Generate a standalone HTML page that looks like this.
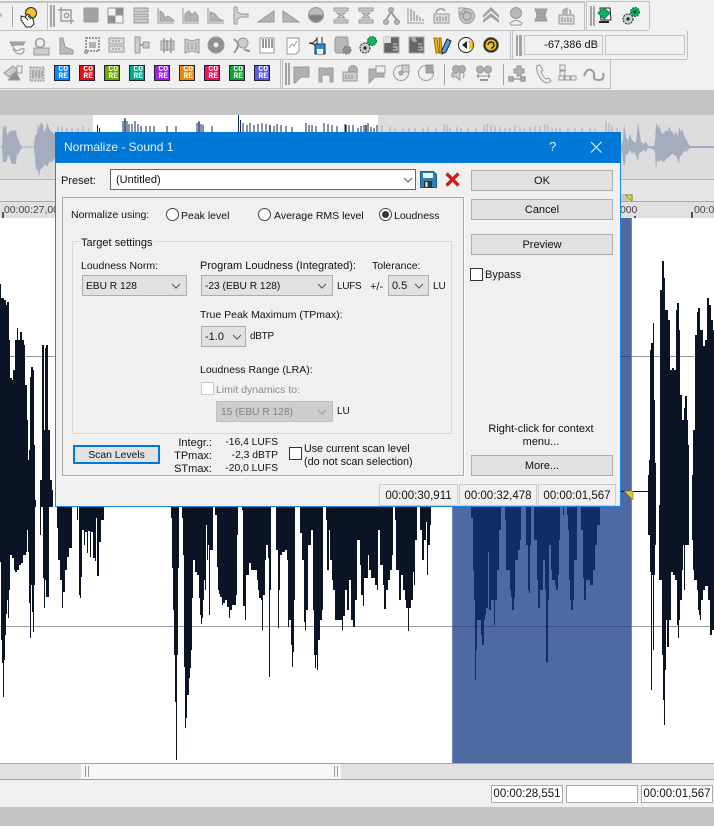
<!DOCTYPE html>
<html><head><meta charset="utf-8"><title>Normalize - Sound 1</title>
<style>
html,body{margin:0;padding:0;background:#f0f0f0}
body{position:relative;width:714px;height:826px;overflow:hidden;font:11px/14px "Liberation Sans",sans-serif;color:#111}
.a{position:absolute;box-sizing:border-box}
.t{position:absolute;white-space:nowrap;line-height:14px;margin-top:1px}
.s{font-size:10.5px}
.btn{position:absolute;box-sizing:border-box;background:#e1e1e1;border:1px solid #adadad;text-align:center;left:471px;width:142px;height:21px;line-height:21px}
.sel{position:absolute;box-sizing:border-box;background:#e1e1e1;border:1px solid #adadad;height:21px;line-height:21px;padding-left:3px;white-space:nowrap;font-size:10.2px}
.sel svg{position:absolute;right:5px;top:7px}
.box{position:absolute;box-sizing:border-box;background:#f0f0f0;border:1px solid #ccc;text-align:center;height:22px;top:484px;line-height:22px;font-size:11.5px}
.cb{position:absolute;box-sizing:border-box;width:13px;height:13px;background:#fff;border:1px solid #333}
.rad{position:absolute;box-sizing:border-box;width:13px;height:13px;background:#fff;border:1px solid #444;border-radius:50%}
.st{position:absolute;box-sizing:border-box;top:785px;height:18px;width:72px;background:#fff;border:1px solid #aaa;text-align:center;line-height:16px;font-size:11.5px}
.core{position:absolute;box-sizing:border-box;top:65px;width:16px;height:16px;border:1px solid #223;color:#fff;font:bold 8px/7px "Liberation Mono",monospace;text-align:right;padding:0 1px 0 0;overflow:hidden}
</style></head><body>

<!-- toolbar frame -->
<div class="a" style="left:0;top:0;width:714px;height:90px;background:#f0f0f0"></div>
<div class="a" style="left:0;top:1px;width:585px;height:2px;background:#c4c4c4"></div>
<div class="a" style="left:0;top:30px;width:649px;height:1px;background:#c0c0c0"></div>
<div class="a" style="left:0;top:59px;width:687px;height:1px;background:#c0c0c0"></div>
<div class="a" style="left:0;top:88px;width:611px;height:1px;background:#c0c0c0"></div>
<div class="a" style="left:584px;top:1px;width:1px;height:29px;background:#c0c0c0"></div>
<div class="a" style="left:586px;top:1px;width:64px;height:1px;background:#c0c0c0"></div>
<div class="a" style="left:586px;top:1px;width:1px;height:29px;background:#c0c0c0"></div>
<div class="a" style="left:649px;top:1px;width:1px;height:29px;background:#c0c0c0"></div>
<div class="a" style="left:510px;top:31px;width:1px;height:28px;background:#c0c0c0"></div>
<div class="a" style="left:512px;top:31px;width:1px;height:28px;background:#c0c0c0"></div>
<div class="a" style="left:687px;top:31px;width:1px;height:28px;background:#c0c0c0"></div>
<div class="a" style="left:280px;top:60px;width:1px;height:28px;background:#c0c0c0"></div>
<div class="a" style="left:282px;top:60px;width:1px;height:28px;background:#c0c0c0"></div>
<div class="a" style="left:610px;top:60px;width:1px;height:29px;background:#c0c0c0"></div>
<div class="a" style="left:47px;top:3px;width:1px;height:27px;background:#c0c0c0"></div>

<svg class="a" style="left:0;top:0" width="714" height="90" viewBox="0 0 714 90">
<g fill="#a4a4a4">
<rect x="50" y="5" width="2" height="22"/><rect x="53" y="5" width="2" height="22"/>
<rect x="590" y="6" width="2" height="20"/><rect x="593" y="6" width="2" height="20"/>
<rect x="516" y="35" width="2" height="21"/><rect x="519" y="35" width="3" height="21"/>
<rect x="285" y="63" width="2" height="22"/><rect x="288" y="63" width="2" height="22"/>
<rect x="12" y="6" width="1" height="21"/><rect x="444" y="64" width="1" height="21"/><rect x="503" y="64" width="1" height="21"/>
</g>
<path d="M0 13a2 2 0 0 1 0 4" fill="#bbb"/>
<!-- hand -->
<g transform="translate(19,7)"><circle cx="12" cy="6" r="5.5" fill="#f2c230" stroke="#222"/><path d="M2 9l4 1 3-3 5 5 1 5-3 3H7L2 13z" fill="#fff" stroke="#222"/><path d="M6 10l3 3M9 9l3 3" stroke="#222"/></g>
<!-- row 1 -->
<g fill="#b4b4b4" stroke="#999" stroke-width="1">
<g transform="translate(58,7)" fill="none" stroke-width="1.4"><path d="M3 0V14H16M0 3H13V17"/><circle cx="8.500" cy="8.500" r="2.200"/></g>
<rect x="84" y="8" width="14" height="14" rx="1" fill="#a2a2a2"/>
<g transform="translate(108,8)"><rect width="15" height="15" fill="#f4f4f4"/><rect x="7.500" y="0" width="7.500" height="7.500" fill="#909090" stroke="none"/><rect x="0" y="7.500" width="7.500" height="7.500" fill="#909090" stroke="none"/></g>
<g transform="translate(133,8)"><path d="M1 0h14v4H1zM1 6h14v3H1zM1 11h14v4H1z" fill="#ccc"/></g>
<g transform="translate(158,8)"><path d="M0 0V15H16" fill="none"/><path d="M2 13V3l3 2 2 5 3-2 4 3 2 2z"/></g>
<g transform="translate(183,8)"><path d="M0 0V15H16" fill="none"/><path d="M2 13V6l4-3 3 4 3-3 3 4v5z"/></g>
<g transform="translate(208,8)"><path d="M0 0V15H16" fill="none"/><path d="M2 13V4l5 2 4 5 5 2z"/></g>
<g transform="translate(233,7)"><path d="M1 0h3v5l4 2h7v3H8l-4 2v5H1z" fill="#d4d4d4"/></g>
<path d="M258 22L274 11v11z"/><path d="M283 11v11h16z"/>
<circle cx="316" cy="15" r="7.500" fill="#bcbcbc"/><path d="M309 15h14a7 7 0 0 1-14 0z" fill="#808080"/>
<g transform="translate(333,8)"><path d="M1 0h14v3H1zM4 5h8l-3 2.500 3 2.500H4l3-2.500zM1 12h14v3H1z" fill="#ccc"/></g>
<g transform="translate(358,8)"><path d="M1 0h14v3H1zM4 5h8l-3 2.500 3 2.500H4l3-2.500zM1 12h14v3H1z" fill="#ccc"/></g>
<g transform="translate(383,7)"><circle cx="8" cy="3" r="2.500"/><circle cx="3" cy="15" r="2.500"/><circle cx="14" cy="15" r="2.500"/><path d="M8 5L3 13M8 5l6 8" fill="none" stroke-width="2"/></g>
<g transform="translate(408,8)"><path d="M0 0V15H16" fill="none"/><path d="M2 1h2v12H2zM5 3h2v10H5zM8 7h2v6H8zM11 9h2v4h-2zM14 11h2v2h-2z" stroke="none"/></g>
<g transform="translate(433,8)"><path d="M1 6h15v9H1z" fill="#ddd"/><path d="M3 5a5 5 0 0 1 9-2" fill="none" stroke-width="1.5"/><path d="M4 9v4M7 8v5M10 9v4M13 8v5" stroke="#888"/></g>
<g transform="translate(458,7)"><circle cx="9" cy="9" r="7.500" fill="#c4c4c4"/><circle cx="9" cy="9" r="4" fill="none" stroke="#888"/><rect x="1" y="1" width="6" height="6" fill="none"/></g>
<path d="M483 15l8-8 8 8v3l-8-7-8 7zM483 20l8-7 8 7v3l-8-6-8 6z" stroke="none" fill="#a2a2a2"/>
<g transform="translate(508,7)"><circle cx="8" cy="6" r="5.500" fill="#b8b8b8"/><path d="M2 16q6-5 12 0l-1 2H3z" fill="#eee"/></g>
<path d="M535 9h12l-2 6 2 6h-12l2-6z" fill="#a2a2a2"/>
<g transform="translate(558,7)"><path d="M1 8h15v9H1z" fill="#ddd"/><path d="M5 8V3l4-2v7M11 2q3 3 1 6" fill="#bbb"/><path d="M4 10v5M7 11v4M10 10v5M13 11v4" stroke="#888"/></g>
</g>
<!-- group 2 row 1 -->
<g transform="translate(596,7)"><path d="M4 1h10l1 12H5z" fill="#fff" stroke="#222"/><path d="M2 6l6-5 6 5-6 6z" fill="#10b060" stroke="#084"/><path d="M3 15h10" stroke="#222" stroke-width="2"/></g>
<g transform="translate(622,7)"><circle cx="6" cy="12" r="5" fill="#ccc" stroke="#222" stroke-dasharray="2 1"/><circle cx="6" cy="12" r="1.600" fill="#222"/><circle cx="13" cy="5" r="4.500" fill="#10b060" stroke="#073" stroke-dasharray="2 1"/><circle cx="13" cy="5" r="1.500" fill="#222"/></g>
<!-- row 2 -->
<g fill="#b0b0b0" stroke="#999">
<g transform="translate(9,38)"><path d="M1 4h15l-2 3H7L3 8z" fill="#a2a2a2"/><path d="M4 9q3 5 6 3t5-1q0 5-4 5T4 11" fill="none" stroke-width="1.2"/></g>
<g transform="translate(34,37)"><circle cx="6" cy="6" r="4.500" fill="#eee" stroke-width="1.5"/><path d="M0 11h15v7H0z" fill="#ccc"/></g>
<path d="M60 38h3l2 9 8 3v4H60z" fill="#bbb"/>
<g transform="translate(84,37)"><rect x="2" y="1" width="13" height="13" fill="none" stroke-dasharray="2 1" stroke-width="2"/><circle cx="2" cy="15" r="1.500"/><path d="M5 5h7v6H5z" fill="#b4b4b4" stroke="none"/></g>
<g transform="translate(109,38)"><rect width="15" height="6" fill="#ddd"/><rect y="8" width="15" height="6" fill="#ddd"/><path d="M3 3h9M3 11h9" stroke="#888" stroke-dasharray="2 1"/></g>
<g transform="translate(134,37)"><path d="M1 0h5v16H1zM9 5h6v6H9z" fill="#ccc"/><path d="M6 8h3" stroke-width="2"/></g>
<g transform="translate(159,38)"><path d="M2 3h13v9H2z" fill="#ccc"/><path d="M5 0v15M8 2v11M12 0v15" stroke-width="1.5"/></g>
<g transform="translate(184,38)"><path d="M1 1l7 2 7-2v14l-7-2-7 2z" fill="#ccc"/><path d="M4 4v8M8 5v6M12 4v8"/></g>
<circle cx="216" cy="45" r="8" fill="#909090"/><circle cx="216" cy="45" r="2.500" fill="#eee" stroke="none"/>
<g transform="translate(234,37)"><circle cx="9" cy="6" r="5" fill="#ccc"/><path d="M0 2q4 3 4 6T0 16M16 14q-3 0-6-2" fill="none" stroke-width="2"/></g>
<g transform="translate(260,38)"><rect width="14" height="15" fill="#fff"/><path d="M3 1v9M6 1v9M9 1v9M12 1v9" stroke="#777" stroke-width="1.5"/></g>
<g transform="translate(286,37)"><path d="M1 1h12v13l-3 3H1z" fill="#fff"/><path d="M3 11l3-4 2 2 3-5" fill="none"/></g>
<g transform="translate(309,36)"><path d="M0 7h4l4-4v8l-4-3z" fill="#fff" stroke="#222"/><rect x="6" y="8" width="10" height="10" fill="#3a8ad0" stroke="#134"/><rect x="8" y="13" width="6" height="5" fill="#fff" stroke="none"/><path d="M8 1v6M13 1v6" stroke="#222" fill="none"/></g>
<g transform="translate(335,37)"><rect x="0" y="0" width="13" height="16" rx="2" fill="#b8b8b8"/><circle cx="12" cy="13" r="4" fill="#909090" stroke="#777" stroke-dasharray="2 1"/></g>
<g transform="translate(359,37)"><circle cx="6" cy="11" r="5" fill="#ccc" stroke="#222" stroke-dasharray="2 1"/><circle cx="6" cy="11" r="1.600" fill="#222" stroke="none"/><circle cx="13" cy="4" r="4.500" fill="#10b060" stroke="#073" stroke-dasharray="2 1"/></g>
<g transform="translate(384,37)"><rect width="15" height="16" fill="#666" stroke="#aaa"/><rect x="0" y="0" width="7" height="6" fill="#ddd" stroke="none"/><path d="M9 7h4M9 10h4v3H9" fill="none" stroke="#ddd"/></g>
<g transform="translate(409,37)"><rect width="15" height="16" fill="#666" stroke="#aaa"/><path d="M1 0h5l2 5H4z" fill="#aaa" stroke="none"/><path d="M9 7h4M9 10h4v3H9" fill="none" stroke="#ccc"/></g>
<g transform="translate(433,37)"><path d="M1 1h3l2 15H3zM6 1h2l1 15H7z" fill="#f0b010" stroke="#a06a00"/><path d="M9 13L14 2l4 2-5 11-4 2z" fill="#4aa0e0" stroke="#222"/></g>
<g transform="translate(458,37)"><circle cx="8" cy="8" r="7.500" fill="#fff" stroke="#222"/><path d="M4 8l5-4v8z" fill="#222" stroke="none"/><path d="M11 4q3 4 0 8M13 3q3 5 0 10" stroke="#e0a800" fill="none" stroke-width="1.5"/></g>
<g transform="translate(483,37)"><circle cx="8" cy="8" r="7.500" fill="#222" stroke="#777"/><circle cx="8" cy="8" r="5.500" fill="#f0c020" stroke="none"/><path d="M5 8a3 3 0 1 1 3 3" fill="none" stroke="#222" stroke-width="1.5"/></g>
</g>
<!-- row 3 -->
<g fill="#b0b0b0" stroke="#999">
<g transform="translate(4,65)"><path d="M0 8l9-7 5 4-9 7z" fill="#ccc"/><path d="M4 15h12l-4-8-8 8" fill="#909090"/><path d="M13 1h5v7h-5z" fill="#eee"/></g>
<g transform="translate(29,66)"><path d="M1 1h14v14H1z" fill="#ccc" stroke-dasharray="2 1"/><path d="M4 4v8M7 5v6M10 4v8M13 5v6" stroke="#888"/></g>
<path d="M294 67h15v10h-8l-6 6h-1z"/>
<path d="M319 68h6l1 2 1-2h6v14h-3v-7h-8v7h-3z"/>
<g transform="translate(343,65)"><circle cx="10" cy="5" r="4.500" fill="#b0b0b0"/><path d="M0 7h14v9H0z" fill="#ccc"/><path d="M3 10v4M6 10v4M9 10v4" stroke="#888"/></g>
<path d="M369 69h15v8h-9l-6 6z"/><rect x="376" y="66" width="9" height="7" fill="#eee"/>
<g transform="translate(393,65)"><circle cx="8" cy="8" r="7.500" fill="#eee"/><circle cx="8" cy="8" r="2"/><rect x="9" y="0" width="7" height="7" fill="#ccc"/></g>
<g transform="translate(418,65)"><circle cx="8" cy="8" r="7.500" fill="#eee"/><path d="M8 8V0h7v8z" fill="#a2a2a2"/></g>
<g transform="translate(451,65)"><circle cx="5" cy="4" r="3.500"/><circle cx="11" cy="4" r="3.500"/><path d="M1 8h4l4-3v10l-4-3H1z" fill="#ccc"/><path d="M12 7q2 3 0 6" fill="none"/></g>
<g transform="translate(476,66)"><circle cx="4" cy="3.500" r="3.500"/><circle cx="12" cy="3.500" r="3.500"/><path d="M1 10h13M3 8l-2 2 2 2M12 8l2 2-2 2" fill="none"/><path d="M4 14h8" stroke-width="2"/></g>
<g transform="translate(509,65)"><path d="M8 1h4v3h3v4h-3v3H8V8H5V4h3z" fill="#b0b0b0"/><path d="M0 12h4v4H0zM12 12h4v4h-4zM4 14h8" stroke-width="1.4"/></g>
<path d="M537 66l3-1 3 5-2 2q2 5 5 7l3-1 2 3-3 2q-6 0-10-9-2-5-1-9z" fill="#eee"/>
<g transform="translate(559,65)"><rect x="1" y="0" width="5" height="5" fill="#eee"/><rect x="1" y="6" width="5" height="5" fill="#eee"/><rect x="6" y="11" width="5" height="4" fill="#eee"/><rect x="0" y="11" width="5" height="4" fill="#eee"/><rect x="12" y="11" width="5" height="4" fill="#eee"/></g>
<path d="M584 76q3-8 7-6t3 6 5 4 4-7" fill="none" stroke-width="2"/>
</g>
</svg>

<div class="core" style="left:54px;background:#0a84ff">CO<br>RE</div>
<div class="core" style="left:79px;background:#e4101c">CO<br>RE</div>
<div class="core" style="left:104px;background:#6aa800">CO<br>RE</div>
<div class="core" style="left:129px;background:#00a88c">CO<br>RE</div>
<div class="core" style="left:154px;background:#a01ee8">CO<br>RE</div>
<div class="core" style="left:179px;background:#e88a00">CO<br>RE</div>
<div class="core" style="left:204px;background:#f01060">CO<br>RE</div>
<div class="core" style="left:229px;background:#10a030">CO<br>RE</div>
<div class="core" style="left:254px;background:#5a5ae0">CO<br>RE</div>

<div class="a" style="left:524px;top:35px;width:79px;height:20px;border:1px solid #c4c4c4;text-align:right;padding-right:4px;line-height:18px;font-size:11px;color:#111">-67,386 dB</div>
<div class="a" style="left:605px;top:35px;width:80px;height:20px;border:1px solid #c4c4c4"></div>

<!-- bands -->
<div class="a" style="left:0;top:90px;width:714px;height:25px;background:#c4c4c4"></div>
<div class="a" style="left:0;top:115px;width:714px;height:64px;background:#dcdcdc"></div>
<div class="a" style="left:93px;top:115px;width:285px;height:17px;background:#fff"></div>

<!-- overview waveform -->
<svg class="a" style="left:0;top:115px" width="714" height="64" viewBox="0 115 714 64">
<g fill="#a4acbd">
<path d="M0 146.500H2L3 125 4 128 6 125 7 134 8 135 9 131 10 132 12 130 14 131 16 130 17 137 18 138 20 144 22 146.500H34L35 135 37 134 38 124 39 128 41 122 43 125 44 133 46 128 47 122 49 128 50 130 52 132 55 134V158L52 162 50 161 47 167 45 164 43 167 41 169 40 170 39 177 38 170 36 169 35 158 34 147.500H22L20 150 18 155 17 153 16 164 12 164 10 159 9 156 8 155 7 160 6 162 3 162 2 147.500H0Z"/>
<path d="M621 146 623 140 624 124 625 130 626 137 628 141 630 134 632 140 634 142 636 142 638 123 640 135 641 142 644 144 646 141 648 146 654 146 655 142 656 123 658 128 659 125 661 132 663 134 666 130 668 132 669 126 671 132 672 131 674 135 676 132 678 136 679 127 681 132 682 129 684 135 686 139 688 143 690 146 714 146V148H690L686 152 684 151 682 155 680 156 679 164 677 158 676 156 672 154 669 157 666 159 664 162 660 160 659 162 657 160 656 171 655 152 653 149 648 148 646 152 644 150 641 152 639 154 638 162 636 155 634 152 632 154 630 150 628 154 626 155 625 163 624 167 622 154 621 148Z"/>
</g>
<path stroke="#a3abbb" stroke-width="1" d="M58 132V127M62 132V126M67 132V128M72 132V127M78 132V128M83 132V126M89 132V128M382 132V125M390 132V127M395 132V128M403 132V128M409 132V128M415 132V128M423 132V128M428 132V127M436 132V128M444 132V124M447 132V125M450 132V128M457 132V127M461 132V128M468 132V128M476 132V128M484 132V125M487 132V124M491 132V125M495 132V126M500 132V127M505 132V128M510 132V128M515 132V125M520 132V127M524 132V128M530 132V127M535 132V126M540 132V126M545 132V124M548 132V125M552 132V127M556 132V128M560 132V128M568 132V128M575 132V128M582 132V128M590 132V128M595 132V128M606 132V121M609 132V123M612 132V126M617 132V128"/>
<path stroke="#10265c" stroke-width="1" d="M97.500 132V125M99.500 132V128M123 132V121M125 132V118M127 132V121M129 132V124M132 132V124M135 132V121M138 132V124M141 132V126M146 132V126M150 132V126M154 132V126M167 132V126M176 132V126M197 132V123M199 132V121M201 132V124M203 132V125M212 132V126M238.500 132V115M240.500 132V120M243 132V123M247 132V125M250 132V123M254 132V125M258 132V124M262 132V123M266 132V124M270 132V125M274 132V126M277 132V124M281 132V125M286 132V126M292 132V127M306 132V123M309 132V125M312 132V125M316 132V126M324 132V123M328 132V124M332 132V125M337 132V126M345 132V124M349 132V125M353 132V125M358 132V128M361 132V126M364 132V125M368 132V123M371 132V127M374 132V128M377 132V125"/>
<path stroke="#10265c" stroke-width="1.400" d="M125 132V119M199 132V122M270 132V125M346 132V125M366 132V125"/>
</svg>

<!-- ruler -->
<div class="a" style="left:0;top:179px;width:714px;height:1px;background:#b8b8b8"></div>
<div class="a" style="left:0;top:180px;width:714px;height:22px;background:#e6e6e6"></div>
<div class="a" style="left:0;top:201px;width:714px;height:1px;background:#a8a8a8"></div>
<div class="a" style="left:0;top:202px;width:714px;height:16px;background:#e0e0e0"></div>
<div class="t" style="left:4px;top:203px;color:#444;font-size:10.400px">00:00:27,000</div>
<div class="t" style="left:620px;top:203px;color:#444;font-size:10.400px">000</div>
<div class="t" style="left:694px;top:203px;color:#444;font-size:10.400px">00:00</div>
<div class="a" style="left:2px;top:212px;width:2px;height:6px;background:#555"></div>
<div class="a" style="left:634px;top:216px;width:2px;height:2px;background:#555"></div>
<div class="a" style="left:691px;top:212px;width:2px;height:6px;background:#555"></div>

<!-- main wave area -->
<div class="a" style="left:0;top:218px;width:714px;height:545px;background:#fff"></div>
<div class="a" style="left:452px;top:218px;width:180px;height:545px;background:#4f69a2;border-left:1px solid #6f86b8;border-right:1px solid #6f86b8"></div>
<svg class="a" style="left:0;top:190px" width="714" height="14" viewBox="0 190 714 14"><rect x="621" y="194" width="12" height="7" fill="#c9c9b4"/><path d="M625 195h7v6z" fill="#f0dc00" stroke="#555" stroke-width=".5"/></svg>

<svg class="a" style="left:0;top:218px" width="714" height="545" viewBox="0 218 714 545">
<rect x="0" y="356" width="452" height="1" fill="#999"/><rect x="632" y="356" width="82" height="1" fill="#999"/><rect x="453" y="356" width="178" height="1" fill="#33467a"/>
<rect x="0" y="626" width="452" height="1" fill="#999"/><rect x="632" y="626" width="82" height="1" fill="#999"/><rect x="453" y="626" width="178" height="1" fill="#3b4f82"/>
<g fill="#0a1425">
<!-- upper left -->
<path d="M0 507V284H1V298H4V300H6V305H7V302H9V340H10V378H12V380H13V370H15V340H17V328H18V340H20V332H22V340H24V345H25V385H27V420H28V460H29V450H30V377H31V367H33V370H34V445H35V500H36V507Z"/>
<path d="M40 507V480H42V345H44V430H45V348H46V345H48V430H50V480H52V490H53V507Z"/>
<!-- lower left -->
<path d="M0 505V562H1V640H2V663H3V697H4V660H5V635H6V614H7V600H8V618H9V590H10V555H12V558H14V570H15V572H17V570H19V565H21V563H23V555H26V552H27V530H28V552H29V603H30V638H31V585H32V612H33V632H34V585H35V505Z"/>
<path d="M40 505V535H41V505Z"/>
<path d="M43 505V578H44V608H45V580H46V597H48V597H49V505Z"/>
<path d="M57 505V528H58V560H60V580H62V608H63V592H65V570H67V557H69V548H72V505Z"/>
<path d="M77 505V520H78V505Z"/>
<path d="M79 505V595H80V598H81V577H82V530H84V545H85V532H87V553H88V531H90V557H91V532H93V558H95V561H96V518H97V576H99V542H101V520H104V505Z"/>
<!-- middle -->
<path d="M171 505V518H172V568H173V610H174V655H175V702H176V760H177V655H178V568H179V505Z"/>
<path d="M182 505V518H183V555H184V667H185V728H186V718H187V695H189V678H190V668H191V650H192V598H193V560H195V572H197V575H199V598H200V615H201V624H202V618H203V600H204V580H205V590H206V525H207V560H208V545H209V615H210V550H213V505Z"/>
<path d="M215 505V515H217V567H218V590H219V594H220V597H222V605H223V603H225V600H227V607H229V618H230V610H232V605H234V605H236V595H237V535H238V505Z"/>
<path d="M242 505V510H243V606H245V620H246V575H249V563H251V570H255V570H257V580H258V590H259V598H261V600H262V630H263V595H265V560H266V545H268V558H269V677H270V590H271V505Z"/>
<path d="M276 505V550H278V628H279V590H280V555H282V552H285V550H287V560H288V627H289V620H291V645H292V667H293V652H294V600H295V505Z"/>
<path d="M300 505V533H302V560H304V622H305V630H306V610H308V545H311V530H313V610H314V655H315V668H316V655H317V670H318V640H320V620H322V610H323V505Z"/>
<path d="M326 505V520H327V570H329V530H330V560H332V580H333V590H335V620H342V630H343V616H345V590H347V610H349V580H351V620H353V627H355V600H357V540H360V565H361V595H363V606H364V578H368V555H369V570H371V578H373V578H375V585H377V590H378V530H380V565H383V585H384V609H386V590H388V580H390V570H392V555H393V505Z"/>
<path d="M395 505V520H396V570H399V600H401V575H403V590H405V600H406V608H408V631H409V608H411V600H413V572H414V585H415V540H417V505Z"/>
<path d="M420 505V530H422V560H424V540H426V522H427V575H428V545H430V525H431V505Z"/>
<!-- right -->
<path d="M648 510V475H649V460H650V350H651V343H653V323H654V400H655V463H656V510Z"/>
<path d="M660 510V290H662V261H664V278H665V310H668V320H670V370H672V368H674V370H676V310H677V303H679V330H680V395H682V420H684V408H685V396H687V420H688V445H689V510Z"/>
<path d="M692 510V475H693V430H695V335H697V312H698V308H700V330H703V346H705V340H707V298H709V305H711V320H713V330H714V510Z"/>
<path d="M648 505V535H650V572H651V690H652V575H653V650H654V575H655V545H656V505Z"/>
<path d="M659 505V580H662V655H663V700H664V725H665V670H666V620H667V647H669V620H671V572H673V575H675V580H677V625H678V638H679V620H680V600H682V570H683V545H684V590H685V545H689V505Z"/>
<path d="M692 505V540H693V570H694V580H697V590H698V610H699V615H700V620H701V600H703V590H705V586H707V586H708V600H710V635H712V630H714V505Z"/>
</g>
<!-- selected waveform -->
<g fill="#122c68">
<path d="M471 505V518H473V570H474V600H475V680H476V650H477V620H480V620H481V635H482V645H484V620H485V615H486V608H488V552H489V610H491V600H494V625H495V600H497V570H499V530H501V505Z"/>
<path d="M505 505V520H506V570H510V590H511V597H512V610H514V598H515V560H518V550H520V540H521V505Z"/>
<path d="M526 505V545H528V590H529V593H530V545H531V505Z"/>
<path d="M534 505V540H537V580H538V608H540V590H543V560H545V590H546V662H548V600H549V545H551V570H552V580H555V585H556V590H558V575H559V540H560V505Z"/>
<path d="M563 505V515H564V505ZM567 505V515H568V505Z"/>
<path d="M568 505V530H569V580H570V600H571V610H573V600H574V560H577V505Z"/>
<path d="M581 505V530H583V578H584V600H586V580H590V585H593V570H595V545H597V525H600V505Z"/>
</g>
<rect x="621" y="491" width="30" height="1" fill="#111"/>
<path d="M624 491h9v9z" fill="#e8c820" stroke="#555" stroke-width=".5"/>
</svg>

<!-- scrollbar & status -->
<div class="a" style="left:0;top:763px;width:714px;height:17px;background:#e0e0e0;border-top:1px solid #a4a4a4;border-bottom:1px solid #a4a4a4"></div>
<div class="a" style="left:81px;top:764px;width:260px;height:15px;background:#f7f7f7"></div>
<div class="a" style="left:85px;top:766px;width:4px;height:11px;border-left:1px solid #999;border-right:1px solid #999"></div>
<div class="a" style="left:334px;top:766px;width:4px;height:11px;border-left:1px solid #999;border-right:1px solid #999"></div>
<div class="a" style="left:0;top:780px;width:714px;height:27px;background:#f0f0f0"></div>
<div class="a" style="left:0;top:807px;width:714px;height:19px;background:#c4c4c4"></div>
<div class="st" style="left:491px">00:00:28,551</div>
<div class="st" style="left:566px"></div>
<div class="st" style="left:641px">00:00:01,567</div>

<!-- dialog -->
<div class="a" style="left:55px;top:132px;width:566px;height:375px;background:#f0f0f0;border:1px solid #1a86dc"></div>
<div class="a" style="left:55px;top:132px;width:566px;height:31px;background:#0078d7"></div>
<div class="t" style="left:64px;top:139px;color:#e6f1fb;font-size:12px">Normalize - Sound 1</div>
<div class="t" style="left:549px;top:139px;color:#e6f1fb;font-size:13px">?</div>
<svg class="a" style="left:590px;top:141px" width="13" height="13" viewBox="0 0 13 13"><path d="M1 1l10.500 10.500M11.500 1L1 11.500" stroke="#e6f1fb" stroke-width="1.100" fill="none"/></svg>

<div class="t" style="left:61px;top:173px">Preset:</div>
<div class="a" style="left:110px;top:169px;width:306px;height:21px;background:#fff;border:1px solid #666"></div>
<div class="t" style="left:116px;top:172px">(Untitled)</div>
<svg class="a" style="left:403px;top:177px" width="10" height="6" viewBox="0 0 10 6"><path d="M1 1l4 4 4-4" stroke="#555" fill="none"/></svg>
<svg class="a" style="left:420px;top:171px" width="17" height="17" viewBox="0 0 17 17"><path d="M.5.5h13l3 3v13H.5z" fill="#2f7fb5" stroke="#1d5f8c"/><rect x="3" y="2" width="10" height="5" fill="#eef4f8"/><rect x="4" y="10" width="8" height="7" fill="#333"/><rect x="5.500" y="11" width="2" height="5" fill="#eee"/></svg>
<svg class="a" style="left:445px;top:172px" width="15" height="15" viewBox="0 0 15 15"><path d="M1.500 1.500l12 12M13.500 1.500l-12 12" stroke="#d3201f" stroke-width="3.400" fill="none"/></svg>

<div class="btn" style="top:170px">OK</div>
<div class="btn" style="top:199px">Cancel</div>
<div class="btn" style="top:234px">Preview</div>
<div class="cb" style="left:470px;top:268px"></div>
<div class="t" style="left:485px;top:267px">Bypass</div>

<div class="a" style="left:62px;top:197px;width:402px;height:279px;border:1px solid #a9a9a9;box-shadow:1px 1px 0 #fff;background:#f0f0f0"></div>
<div class="t s" style="left:71px;top:207px">Normalize using:</div>
<div class="rad" style="left:166px;top:208px"></div><div class="t s" style="left:181px;top:208px">Peak level</div>
<div class="rad" style="left:258px;top:208px"></div><div class="t s" style="left:274px;top:208px">Average RMS level</div>
<div class="rad" style="left:379px;top:208px"></div><div class="a" style="left:382px;top:211px;width:7px;height:7px;border-radius:50%;background:#333"></div><div class="t s" style="left:394px;top:208px">Loudness</div>

<div class="a" style="left:72px;top:241px;width:380px;height:193px;border:1px solid #d8d8d8"></div>
<div class="t" style="left:80px;top:235px;background:#f0f0f0;padding:0 1px">Target settings</div>

<div class="t s" style="left:81px;top:258px">Loudness Norm:</div>
<div class="sel" style="left:82px;top:275px;width:105px">EBU R 128<svg width="10" height="6" viewBox="0 0 10 6"><path d="M1 1l4 4 4-4" stroke="#555" fill="none"/></svg></div>
<div class="t" style="left:200px;top:258px">Program Loudness (Integrated):</div>
<div class="sel" style="left:201px;top:275px;width:132px">-23 (EBU R 128)<svg width="10" height="6" viewBox="0 0 10 6"><path d="M1 1l4 4 4-4" stroke="#555" fill="none"/></svg></div>
<div class="t" style="left:337px;top:279px;font-size:10px;letter-spacing:-.3px">LUFS</div>
<div class="t s" style="left:372px;top:258px">Tolerance:</div>
<div class="t" style="left:370px;top:279px">+/-</div>
<div class="sel" style="left:388px;top:275px;width:41px;font-size:11px">0.5<svg width="10" height="6" viewBox="0 0 10 6" style="right:4px"><path d="M1 1l4 4 4-4" stroke="#555" fill="none"/></svg></div>
<div class="t" style="left:433px;top:279px;font-size:10px">LU</div>

<div class="t s" style="left:200px;top:307px">True Peak Maximum (TPmax):</div>
<div class="sel" style="left:201px;top:326px;width:45px;font-size:11px">-1.0<svg width="10" height="6" viewBox="0 0 10 6" style="right:3px"><path d="M1 1l4 4 4-4" stroke="#555" fill="none"/></svg></div>
<div class="t" style="left:250px;top:329px;font-size:10px;letter-spacing:-.3px">dBTP</div>

<div class="t s" style="left:200px;top:362px">Loudness Range (LRA):</div>
<div class="cb" style="left:201px;top:382px;border-color:#ccc"></div>
<div class="t s" style="left:216px;top:382px;color:#8a8a8a">Limit dynamics to:</div>
<div class="sel" style="left:216px;top:401px;width:117px;background:#cdcdcd;border-color:#c0c0c0;color:#808080;padding-left:4px">15 (EBU R 128)<svg width="10" height="6" viewBox="0 0 10 6"><path d="M1 1l4 4 4-4" stroke="#999" fill="none"/></svg></div>
<div class="t" style="left:337px;top:404px;font-size:10px">LU</div>

<div class="a" style="left:73px;top:445px;width:87px;height:19px;background:#e1e1e1;border:2px solid #0078d7;text-align:center;line-height:17px;font-size:10.400px">Scan Levels</div>
<div class="t" style="left:160px;top:435px;width:52px;text-align:right">Integr.:</div>
<div class="t" style="left:160px;top:448px;width:52px;text-align:right">TPmax:</div>
<div class="t" style="left:160px;top:461px;width:52px;text-align:right">STmax:</div>
<div class="t" style="left:218px;top:435px;width:60px;text-align:right;font-size:10.300px">-16,4 LUFS</div>
<div class="t" style="left:218px;top:448px;width:60px;text-align:right;font-size:10.300px">-2,3 dBTP</div>
<div class="t" style="left:218px;top:461px;width:60px;text-align:right;font-size:10.300px">-20,0 LUFS</div>
<div class="cb" style="left:289px;top:447px"></div>
<div class="t" style="left:304px;top:441px;font-size:10.700px">Use current scan level</div>
<div class="t" style="left:304px;top:454px;font-size:10.800px">(do not scan selection)</div>

<div class="t" style="left:470px;top:421px;width:142px;text-align:center">Right-click for context</div>
<div class="t" style="left:470px;top:434px;width:142px;text-align:center">menu...</div>
<div class="btn" style="top:455px">More...</div>

<div class="box" style="left:379px;width:79px">00:00:30,911</div>
<div class="box" style="left:459px;width:78px">00:00:32,478</div>
<div class="box" style="left:538px;width:78px">00:00:01,567</div>

</body></html>
